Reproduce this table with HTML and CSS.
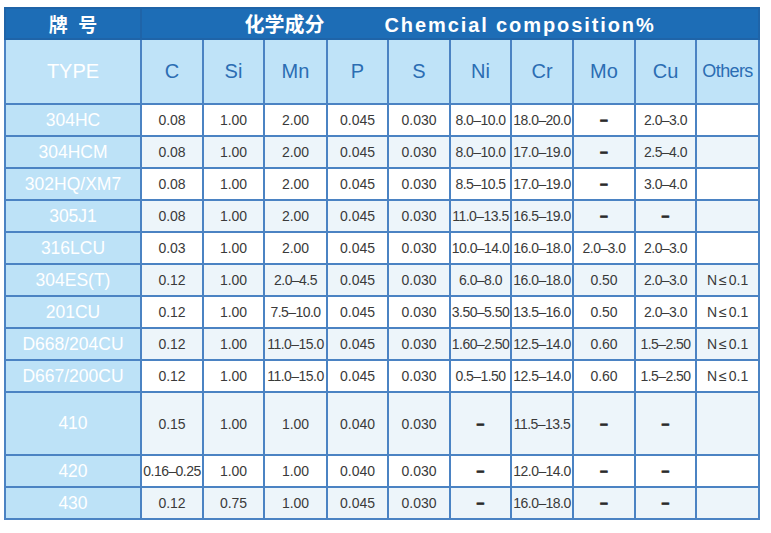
FILE: index.html
```html
<!DOCTYPE html>
<html lang="zh">
<head>
<meta charset="utf-8">
<title>Chemical composition</title>
<link rel="stylesheet" href="styles.css">
</head>
<body>
<table class="comp">
  <colgroup>
    <col class="c-type"><col class="c62"><col class="c61"><col class="c63"><col class="c61"><col class="c62"><col class="c61"><col class="c62"><col class="c62"><col class="c61"><col class="c63">
  </colgroup>
  <tr class="r-top">
    <th class="bar">牌&nbsp;&nbsp;号</th>
    <th class="bar" colspan="10"><span class="zh">化学成分</span><span class="en">Chemcial composition%</span></th>
  </tr>
  <tr class="r-head">
    <th class="type">TYPE</th>
    <th>C</th><th>Si</th><th>Mn</th><th>P</th><th>S</th><th>Ni</th><th>Cr</th><th>Mo</th><th>Cu</th><th class="oth">Others</th>
  </tr>
  <tr class="w">
    <td class="type">304HC</td><td>0.08</td><td>1.00</td><td>2.00</td><td>0.045</td><td>0.030</td><td class="rg">8.0–10.0</td><td class="rg">18.0–20.0</td><td class="d">–</td><td class="rg">2.0–3.0</td><td></td>
  </tr>
  <tr class="l">
    <td class="type">304HCM</td><td>0.08</td><td>1.00</td><td>2.00</td><td>0.045</td><td>0.030</td><td class="rg">8.0–10.0</td><td class="rg">17.0–19.0</td><td class="d">–</td><td class="rg">2.5–4.0</td><td></td>
  </tr>
  <tr class="w">
    <td class="type">302HQ/XM7</td><td>0.08</td><td>1.00</td><td>2.00</td><td>0.045</td><td>0.030</td><td class="rg">8.5–10.5</td><td class="rg">17.0–19.0</td><td class="d">–</td><td class="rg">3.0–4.0</td><td></td>
  </tr>
  <tr class="l">
    <td class="type">305J1</td><td>0.08</td><td>1.00</td><td>2.00</td><td>0.045</td><td>0.030</td><td class="rg">11.0–13.5</td><td class="rg">16.5–19.0</td><td class="d">–</td><td class="d">–</td><td></td>
  </tr>
  <tr class="w">
    <td class="type">316LCU</td><td>0.03</td><td>1.00</td><td>2.00</td><td>0.045</td><td>0.030</td><td class="rg">10.0–14.0</td><td class="rg">16.0–18.0</td><td class="rg">2.0–3.0</td><td class="rg">2.0–3.0</td><td></td>
  </tr>
  <tr class="l">
    <td class="type">304ES(T)</td><td>0.12</td><td>1.00</td><td class="rg">2.0–4.5</td><td>0.045</td><td>0.030</td><td class="rg">6.0–8.0</td><td class="rg">16.0–18.0</td><td>0.50</td><td class="rg">2.0–3.0</td><td class="n">N<span class="le">≤</span>0.1</td>
  </tr>
  <tr class="w">
    <td class="type">201CU</td><td>0.12</td><td>1.00</td><td class="rg">7.5–10.0</td><td>0.045</td><td>0.030</td><td class="rg">3.50–5.50</td><td class="rg">13.5–16.0</td><td>0.50</td><td class="rg">2.0–3.0</td><td class="n">N<span class="le">≤</span>0.1</td>
  </tr>
  <tr class="l">
    <td class="type">D668/204CU</td><td>0.12</td><td>1.00</td><td class="rg">11.0–15.0</td><td>0.045</td><td>0.030</td><td class="rg">1.60–2.50</td><td class="rg">12.5–14.0</td><td>0.60</td><td class="rg">1.5–2.50</td><td class="n">N<span class="le">≤</span>0.1</td>
  </tr>
  <tr class="w">
    <td class="type">D667/200CU</td><td>0.12</td><td>1.00</td><td class="rg">11.0–15.0</td><td>0.045</td><td>0.030</td><td class="rg">0.5–1.50</td><td class="rg">12.5–14.0</td><td>0.60</td><td class="rg">1.5–2.50</td><td class="n">N<span class="le">≤</span>0.1</td>
  </tr>
  <tr class="l tall">
    <td class="type">410</td><td>0.15</td><td>1.00</td><td>1.00</td><td>0.040</td><td>0.030</td><td class="d">–</td><td class="rg">11.5–13.5</td><td class="d">–</td><td class="d">–</td><td></td>
  </tr>
  <tr class="w">
    <td class="type">420</td><td class="rg">0.16–0.25</td><td>1.00</td><td>1.00</td><td>0.040</td><td>0.030</td><td class="d">–</td><td class="rg">12.0–14.0</td><td class="d">–</td><td class="d">–</td><td></td>
  </tr>
  <tr class="l">
    <td class="type">430</td><td>0.12</td><td>0.75</td><td>1.00</td><td>0.045</td><td>0.030</td><td class="d">–</td><td class="rg">16.0–18.0</td><td class="d">–</td><td class="d">–</td><td></td>
  </tr>
</table>
</body>
</html>
```
FILE: styles.css
```css
html, body {
  margin: 0;
  padding: 0;
  background: #ffffff;
}

body {
  padding: 7px 0 0 4px;
  font-family: "Liberation Sans", Arial, "Noto Sans CJK SC", sans-serif;
}

.comp {
  border-collapse: collapse;
  table-layout: fixed;
  width: 754px;
  border: 2px solid #4b83c3;
}

.c-type { width: 136px; }
.c61 { width: 61px; }
.c62 { width: 62px; }
.c63 { width: 63px; }

.comp th,
.comp td {
  padding: 0;
  text-align: center;
  vertical-align: middle;
  border: 2px solid #4b83c3;
  white-space: nowrap;
  overflow: hidden;
}

.r-top th.bar {
  height: 29px;
  background: #1d6db6;
  color: #ffffff;
  border-color: #1f64a8;
  font-family: "Liberation Sans", Arial, "Noto Sans CJK SC", sans-serif;
  font-weight: 700;
  font-size: 19px;
}

.r-top .zh {
  font-family: "Noto Sans CJK SC", sans-serif;
  font-size: 20px;
  font-weight: 700;
  margin-right: 60px;
}

.r-top .en {
  font-size: 20px;
  letter-spacing: 1.9px;
}

.r-head th {
  height: 63px;
  background: #bfe3f8;
  color: #2b6db3;
  font-weight: 400;
  font-size: 20px;
}

.r-head th.type {
  color: #ffffff;
}

.r-head th.oth {
  font-size: 18px;
  letter-spacing: -0.6px;
}

.comp td {
  height: 30px;
  font-size: 14px;
  color: #3a3a3a;
}

.comp tr.tall td {
  height: 61px;
}

.comp tr.w td { background: #ffffff; }
.comp tr.l td { background: #edf5fa; }

.comp td.type {
  background: #bde2f7;
  color: #ffffff;
  font-size: 17.5px;
}

.comp tr.w td.type,
.comp tr.l td.type {
  background: #bde2f7;
}

.comp td.rg {
  font-size: 14px;
  letter-spacing: -0.55px;
}

.comp td.d {
  font-weight: 700;
  font-size: 14px;
  color: #2a2a2a;
  -webkit-text-stroke: 0.7px #2a2a2a;
}

.comp td.n {
  font-size: 14px;
}

.comp td.n .le {
  margin: 0 2px;
}
```
